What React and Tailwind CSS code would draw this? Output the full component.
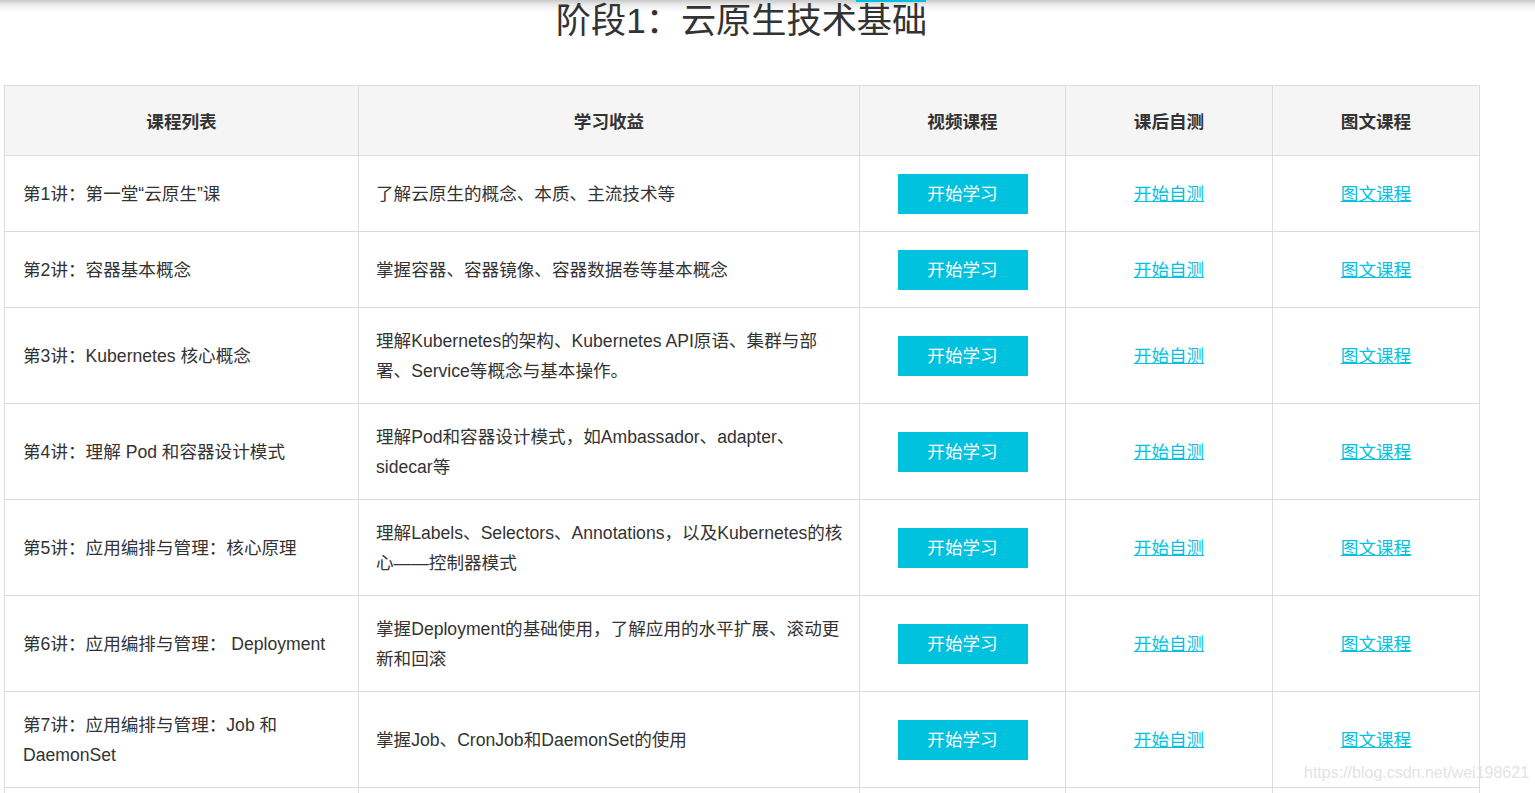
import React from 'react';

// 阶段1 课程表
const lessons = [
  { title: '第1讲：第一堂“云原生”课', gain: '了解云原生的概念、本质、主流技术等' },
  { title: '第2讲：容器基本概念', gain: '掌握容器、容器镜像、容器数据卷等基本概念' },
  { title: '第3讲：Kubernetes 核心概念', gain: '理解Kubernetes的架构、Kubernetes API原语、集群与部署、Service等概念与基本操作。' },
  { title: '第4讲：理解 Pod 和容器设计模式', gain: '理解Pod和容器设计模式，如Ambassador、adapter、sidecar等' },
  { title: '第5讲：应用编排与管理：核心原理', gain: '理解Labels、Selectors、Annotations，以及Kubernetes的核心——控制器模式' },
  { title: '第6讲：应用编排与管理： Deployment', gain: '掌握Deployment的基础使用，了解应用的水平扩展、滚动更新和回滚' },
  { title: '第7讲：应用编排与管理：Job 和 DaemonSet', gain: '掌握Job、CronJob和DaemonSet的使用' },
  { title: '第8讲：应用配置管理', gain: '理解ConfigMap、Secret、ServiceAccount等配置管理' },
];

const font = { fontFamily: 'Arial, "Liberation Sans", "Noto Sans CJK SC", sans-serif' };

const App = () => {
  return (
    <div
      className="relative w-[1535px] h-[793px] overflow-hidden bg-white bg-[linear-gradient(to_bottom,#c9c9c9_0px,#ececec_5px,#ffffff_12px)]"
      style={font}
    >
      {/* 顶部高亮条 */}
      <div className="absolute left-[856px] top-0 w-[70px] h-[2px] bg-[#00c1de]" />

      <div className="ml-[4px] w-[1475px]">
        <h1 className="pt-[3px] h-[85px] text-center text-[35.2px] leading-[36px] text-[#333]">
          阶段1：云原生技术基础
        </h1>

        <table className="w-[1475px] table-fixed border-collapse text-[17.6px] text-[#333]">
          <colgroup>
            <col className="w-[354px]" />
            <col className="w-[501px]" />
            <col className="w-[206px]" />
            <col className="w-[207px]" />
            <col className="w-[207px]" />
          </colgroup>
          <thead>
            <tr className="h-[70px] bg-[#f5f5f5]">
              {['课程列表', '学习收益', '视频课程', '课后自测', '图文课程'].map((h) => (
                <th key={h} className="border border-[#dcdcdc] pt-[3px] text-center font-bold">
                  {h}
                </th>
              ))}
            </tr>
          </thead>
          <tbody>
            {lessons.map((l) => (
              <tr key={l.title}>
                <td className="border border-[#dcdcdc] px-[18px] pt-[18px] pb-[17px] leading-[30px] align-middle">
                  {l.title}
                </td>
                <td className="border border-[#dcdcdc] pl-[17px] pr-[13px] pt-[18px] pb-[17px] leading-[30px] align-middle">
                  {l.gain}
                </td>
                <td className="border border-[#dcdcdc] pt-[18px] pb-[17px] text-center align-middle">
                  <button className="inline-flex items-center justify-center w-[130px] h-[40px] bg-[#00c1de] text-white text-[17.6px]">
                    开始学习
                  </button>
                </td>
                <td className="border border-[#dcdcdc] pt-[18px] pb-[17px] text-center align-middle">
                  <a href="#" className="text-[#00c1de] underline">开始自测</a>
                </td>
                <td className="border border-[#dcdcdc] pt-[18px] pb-[17px] text-center align-middle">
                  <a href="#" className="text-[#00c1de] underline">图文课程</a>
                </td>
              </tr>
            ))}
          </tbody>
        </table>
      </div>

      {/* 水印 */}
      <div className="absolute left-[1304px] top-[763px] text-[16px] leading-[20px] text-[#e3e3e3]">
        https://blog.csdn.net/wei198621
      </div>
    </div>
  );
};

export default App;
